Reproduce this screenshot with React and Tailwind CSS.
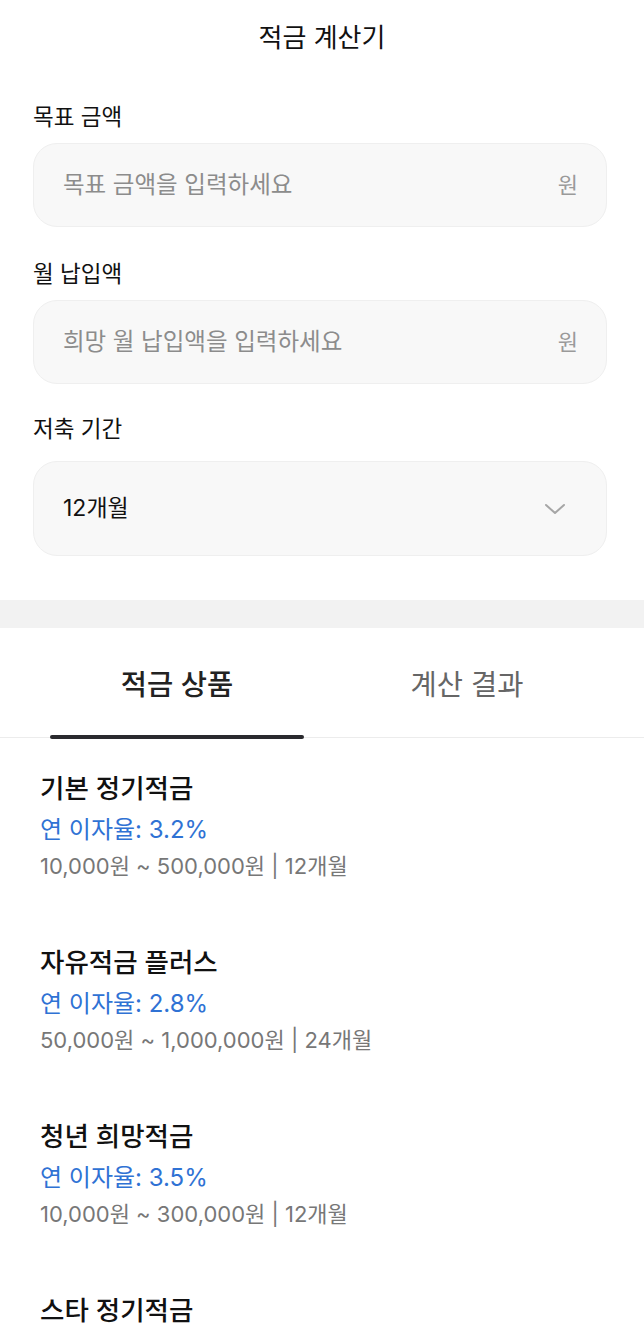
import React from "react";

const products = [
  { name: "기본 정기적금", rate: "3.2", range: "10,000원 ~ 500,000원 | 12개월" },
  { name: "자유적금 플러스", rate: "2.8", range: "50,000원 ~ 1,000,000원 | 24개월" },
  { name: "청년 희망적금", rate: "3.5", range: "10,000원 ~ 300,000원 | 12개월" },
  { name: "스타 정기적금", rate: "3.0", range: "10,000원 ~ 1,000,000원 | 36개월" },
];

function Field({ label, placeholder, mt }) {
  return (
    <div className={mt}>
      <div className="text-[22.5px] leading-[30px] text-[#111]">{label}</div>
      <div className="mt-[11px] h-[84px] rounded-[24px] bg-[#f8f8f8] border border-[#efefef] flex items-center justify-between pl-[29px] pr-[28px]">
        <span className="text-[23.5px] text-[#8c8c8c]">{placeholder}</span>
        <span className="text-[22px] text-[#9a9a9a]">원</span>
      </div>
    </div>
  );
}

export default function App() {
  return (
    <div
      className="w-[644px] h-[1332px] overflow-hidden bg-white"
      style={{ fontFamily: '"Inter", "Noto Sans CJK KR", "Noto Sans", sans-serif' }}
    >
      <div className="h-[74px] flex items-center justify-center text-[26px] text-[#111]">
        적금 계산기
      </div>
      <div className="pl-[33px] pr-[37px]">
        <Field label="목표 금액" placeholder="목표 금액을 입력하세요" mt="mt-[28px]" />
        <Field label="월 납입액" placeholder="희망 월 납입액을 입력하세요" mt="mt-[32px]" />
        <div className="mt-[30px]">
          <div className="text-[22.5px] leading-[30px] text-[#111]">저축 기간</div>
          <div className="mt-[17px] h-[95px] rounded-[24px] bg-[#f8f8f8] border border-[#efefef] flex items-center justify-between pl-[29px] pr-[40px]">
            <span className="text-[23px] text-[#111]">12개월</span>
            <svg width="22" height="12" viewBox="0 0 22 12" fill="none">
              <path d="M2 2 L11 10 L20 2" stroke="#a6a6a6" strokeWidth="2" strokeLinecap="round" strokeLinejoin="round" />
            </svg>
          </div>
        </div>
      </div>
      <div className="mt-[44px] h-[28px] bg-[#f2f2f2]" />
      <div className="relative h-[110px] flex px-[50px] gap-[36px] border-b border-[#ececec]">
        <div className="relative flex-1 flex items-center justify-center pt-[6px] text-[28.5px] font-medium text-[#222]">
          적금 상품
          <div className="absolute left-0 right-0 bottom-[-2px] h-[4px] rounded-full bg-[#2a2a2e]" />
        </div>
        <div className="flex-1 flex items-center justify-center pt-[6px] text-[28.5px] text-[#666]">
          계산 결과
        </div>
      </div>
      <div className="px-[40px] pt-[33px]">
        {products.map((p) => (
          <div key={p.name} className="h-[174px]">
            <div className="text-[26.5px] font-medium leading-[34px] text-[#111]">{p.name}</div>
            <div className="mt-[8px] text-[24px] leading-[34px] text-[#2f72d4]">연 이자율: {p.rate}%</div>
            <div className="mt-[2px] text-[22px] leading-[34px] text-[#777]">{p.range}</div>
          </div>
        ))}
      </div>
    </div>
  );
}
